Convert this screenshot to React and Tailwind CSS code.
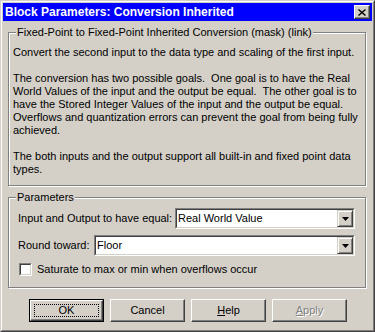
import React from "react";

const raised =
  "border border-t-white border-l-white border-r-[#404040] border-b-[#404040] shadow-[inset_-1px_-1px_0_#808080]";

function Combo({ value }) {
  return (
    <div className="flex-1 h-[21px] border border-t-[#808080] border-l-[#808080] border-r-white border-b-white">
      <div className="h-full flex items-center bg-white border border-t-[#404040] border-l-[#404040] border-r-[#d4d0c8] border-b-[#d4d0c8]">
        <span className="flex-1 pl-[1px] whitespace-nowrap">{value}</span>
        <div className="w-[16px] h-full flex items-center justify-center bg-[#d4d0c8] border border-t-[#d4d0c8] border-l-[#d4d0c8] border-r-[#404040] border-b-[#404040] shadow-[inset_1px_1px_0_#fff,inset_-1px_-1px_0_#808080]">
          <svg width="7" height="4" viewBox="0 0 7 4">
            <polygon points="0,0 7,0 3.5,4" fill="#000" />
          </svg>
        </div>
      </div>
    </div>
  );
}

function Button({ children, disabled }) {
  return (
    <div
      className={`w-[75px] h-[23px] flex items-center justify-center bg-[#d4d0c8] ${raised} ${
        disabled ? "text-[#808080] [text-shadow:1px_1px_0_#fff]" : ""
      }`}
    >
      {children}
    </div>
  );
}

export default function App() {
  const description = [
    "Convert the second input to the data type and scaling of the first input.",
    "",
    "The conversion has two possible goals.  One goal is to have the Real",
    "World Values of the input and the output be equal.  The other goal is to",
    "have the Stored Integer Values of the input and the output be equal.",
    "Overflows and quantization errors can prevent the goal from being fully",
    "achieved.",
    "",
    "The both inputs and the output support all built-in and fixed point data",
    "types.",
  ];

  return (
    <div className="w-[375px] h-[332px] bg-[#d4d0c8] border border-t-[#d4d0c8] border-l-[#d4d0c8] border-r-[#404040] border-b-[#404040] font-['Liberation_Sans',Arial,sans-serif] text-[11px] leading-[13px] text-black">
      <div className="h-full p-px flex flex-col border border-t-white border-l-white border-r-[#808080] border-b-[#808080]">
        {/* Title bar */}
        <div className="h-[18px] bg-[#0000ff] flex items-center justify-between pl-[2px] pr-[2px]">
          <span className="text-white font-bold text-[12px] leading-[18px] whitespace-nowrap">
            Block Parameters: Conversion Inherited
          </span>
          <div className={`w-[16px] h-[14px] flex items-center justify-center bg-[#d4d0c8] ${raised}`}>
            <svg width="8" height="7" viewBox="0 0 8 7">
              <path d="M0.5 0.5 L7.5 6.5 M7.5 0.5 L0.5 6.5" stroke="#000" strokeWidth="1.4" />
            </svg>
          </div>
        </div>

        {/* Description group */}
        <div className="relative mt-[11px] ml-[5px] mr-[6px] pt-[13px] pl-[4px] pb-[9px] border border-[#808080] shadow-[inset_1px_1px_0_#fff,1px_1px_0_#fff]">
          <span className="absolute left-[7px] top-[-7px] px-[1px] bg-[#d4d0c8] whitespace-nowrap">
            Fixed-Point to Fixed-Point Inherited Conversion (mask) (link)
          </span>
          {description.map((line, i) => (
            <div key={i} className="h-[13px] whitespace-pre">
              {line}
            </div>
          ))}
        </div>

        {/* Parameters group */}
        <div className="relative mt-[11px] ml-[5px] mr-[6px] pt-[10px] pl-[9px] pr-[10px] pb-[11px] border border-[#808080] shadow-[inset_1px_1px_0_#fff,1px_1px_0_#fff]">
          <span className="absolute left-[7px] top-[-7px] px-[1px] bg-[#d4d0c8] whitespace-nowrap">
            Parameters
          </span>
          <div className="flex items-center h-[21px]">
            <span className="w-[157px] whitespace-nowrap">Input and Output to have equal:</span>
            <Combo value="Real World Value" />
          </div>
          <div className="flex items-center h-[21px] mt-[6px]">
            <span className="w-[76px] whitespace-nowrap">Round toward:</span>
            <Combo value="Floor" />
          </div>
          <div className="flex items-center h-[13px] mt-[7px]">
            <div className="ml-[1px] w-[13px] h-[13px] border border-t-[#808080] border-l-[#808080] border-r-white border-b-white">
              <div className="h-full bg-white border border-t-[#404040] border-l-[#404040] border-r-[#d4d0c8] border-b-[#d4d0c8]" />
            </div>
            <span className="ml-[5px] whitespace-nowrap">Saturate to max or min when overflows occur</span>
          </div>
        </div>

        {/* Buttons */}
        <div className="flex gap-[6px] mt-[11px] ml-[26px]">
          <div className="w-[75px] h-[23px] border border-black">
            <div className={`h-full p-[3px] bg-[#d4d0c8] ${raised}`}>
              <div className="h-full flex items-center justify-center border border-dotted border-black">
                OK
              </div>
            </div>
          </div>
          <Button>Cancel</Button>
          <Button>
            <span>
              <u>H</u>elp
            </span>
          </Button>
          <Button disabled>
            <span>
              <u>A</u>pply
            </span>
          </Button>
        </div>
      </div>
    </div>
  );
}
